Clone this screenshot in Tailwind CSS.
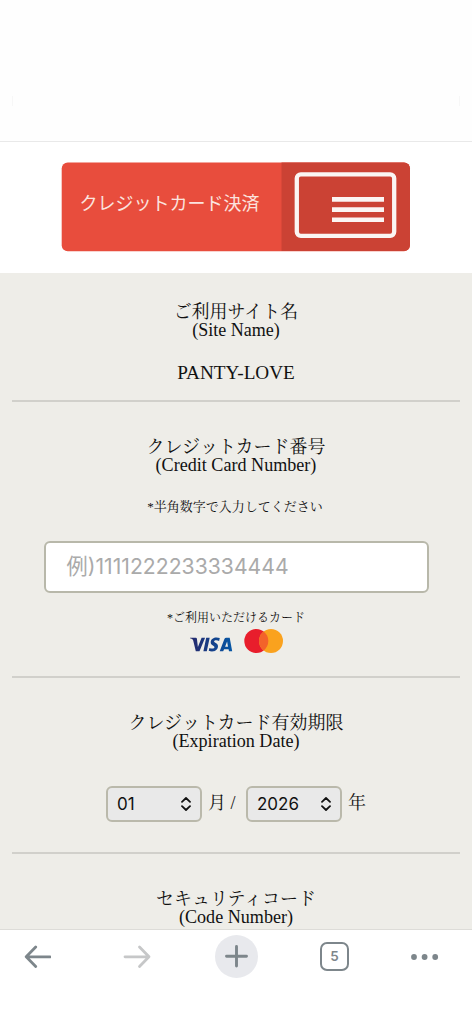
<!DOCTYPE html>
<html lang="ja">
<head>
<meta charset="utf-8">
<meta name="viewport" content="width=device-width, initial-scale=1">
<title>クレジットカード決済</title>
<script src="https://cdn.jsdelivr.net/npm/@tailwindcss/browser@4"></script>
</head>
<body class="bg-white">
<div class="flex h-[1024px] w-[472px] flex-col overflow-hidden font-['Liberation_Serif','Noto_Serif_CJK_JP','Noto_Sans_CJK_JP',serif] text-[#111] whitespace-nowrap">
  <header class="flex h-[142px] shrink-0 items-start justify-between border-b border-[#e9e9e9] bg-[#fefefe] px-3 pt-24">
    <span class="h-2.5 w-px bg-[#f7f7f7]"></span>
    <span class="h-2.5 w-px bg-[#f7f7f7]"></span>
  </header>

  <main class="min-h-0 flex-1 overflow-hidden bg-[#eeede8]">
    <div class="h-[131px] bg-white pt-5 pl-[61px]">
      <svg class="block" width="350" height="90" viewBox="0 0 350 90">
        <rect x=".7" y=".5" width="348.3" height="88.7" rx="6" fill="#e84d3d"/>
        <path d="M220.500 .5H343a6 6 0 0 1 6 6V83a6 6 0 0 1-6 6H220.500Z" fill="#cb4234"/>
        <rect x="235.800" y="12.300" width="97.400" height="61.500" rx="4" fill="none" stroke="#fbf5f3" stroke-width="4.300"/>
        <path d="M271 37.400h52M271 47.600h52M271 57.700h52" stroke="#fbf5f3" stroke-width="4.600"/>
        <text x="18.500" y="48.300" font-family="Noto Sans CJK JP, sans-serif" font-size="18.500" fill="#fbe3df" textLength="180" lengthAdjust="spacingAndGlyphs">クレジットカード決済</text>
      </svg>
    </div>

    <section class="mx-3 flex h-[129px] flex-col items-center border-b-2 border-[#d1d0cb] pt-[29px]">
      <h2 class="relative top-px text-[18px] leading-[19px]">ご利用サイト名</h2>
      <p class="text-[18px] leading-[19px]">(Site Name)</p>
      <p class="mt-[23px] text-[19.2px] leading-[19px]">PANTY-LOVE</p>
    </section>

    <section class="mx-3 flex h-[276px] flex-col items-center border-b-2 border-[#d1d0cb] pt-[35px]">
      <h2 class="relative top-px text-[18px] leading-[19px]">クレジットカード番号</h2>
      <p class="text-[18.1px] leading-[19px]">(Credit Card Number)</p>
      <p class="mt-6 -ml-0.5 text-[13px] leading-[16px]">*半角数字で入力してください</p>
      <div class="mt-[26px] flex h-[52px] w-[385px] items-center rounded-[6px] border-[2.5px] border-[#b8b8aa] bg-white pl-[21px] font-['Inter','Noto_Sans_CJK_JP',sans-serif] text-[21.2px] text-[#aaa]">例)1111222233334444</div>
      <p class="mt-[17px] text-[12px] leading-[16px]">*ご利用いただけるカード</p>
      <svg class="mt-[2px]" width="96" height="26" viewBox="0 0 96 26">
        <defs><linearGradient id="visa"><stop stop-color="#25286b"/><stop offset="1" stop-color="#0757a5"/></linearGradient></defs>
        <path fill="url(#visa)" d="M2 9.700h5.800q1 .1 1.100 1l1 8.200 3.700-9.200h3.500l-5.600 13.600H7.800L5.200 12.500Q4.900 10.800 2 10.200ZM18.200 9.700h3.500l-2.900 13.600h-3.400ZM31.800 10.100l-.7 2.800c-2-1-4.900-.9-5 .5-.1 1.200 4.300 1.600 3.900 5.100-.5 4.700-5.400 5.800-9.300 4.300l.7-2.900c2.200 1.200 5 .8 5.100-.6.100-1.600-4.100-1.700-3.800-5.200.4-4.200 5-5.600 9.100-4ZM38.200 9.700h3.500l2.500 13.600h-3.200l-.4-2.100h-4.500l-.9 2.100h-3.500l4.700-12.200q.5-1.400 1.800-1.400Zm.9 3.900-2 5.100h2.900Z"/>
        <circle cx="68.300" cy="12.900" r="12" fill="#e81e2c"/>
        <circle cx="83" cy="12.900" r="12" fill="#faa21e"/>
        <path d="M75.650 3.400a12 12 0 0 1 0 19a12 12 0 0 1 0-19Z" fill="#f3632a"/>
      </svg>
    </section>

    <section class="mx-3 flex h-[176px] flex-col items-center border-b-2 border-[#d1d0cb] pt-[35px]">
      <h2 class="relative top-px text-[18px] leading-[19px]">クレジットカード有効期限</h2>
      <p class="text-[18.1px] leading-[19px]">(Expiration Date)</p>
      <div class="mt-[35px] flex items-center text-[18px]">
        <div class="flex h-9 w-24 items-center justify-between rounded-[6px] border-[2.5px] border-[#bab9ab] bg-[#e9e9e9] pr-[9px] pl-[9px] font-['Inter',sans-serif] text-[17px]">
          <span class="pt-px">01</span>
          <svg width="10" height="14" viewBox="0 0 10 14" fill="none" stroke="#111" stroke-width="1.800" stroke-linecap="round" stroke-linejoin="round"><path d="M1 4.800 5 1l4 3.800M1 9.200 5 13l4-3.800"/></svg>
        </div>
        <span class="relative -top-px ml-1.5 w-[38px]">月 /</span>
        <div class="flex h-9 w-24 items-center justify-between rounded-[6px] border-[2.5px] border-[#bab9ab] bg-[#e9e9e9] pr-[9px] pl-[9px] font-['Inter',sans-serif] text-[17px]">
          <span class="pt-px">2026</span>
          <svg width="10" height="14" viewBox="0 0 10 14" fill="none" stroke="#111" stroke-width="1.800" stroke-linecap="round" stroke-linejoin="round"><path d="M1 4.800 5 1l4 3.800M1 9.200 5 13l4-3.800"/></svg>
        </div>
        <span class="relative -top-px ml-1.5">年</span>
      </div>
    </section>

    <section class="flex flex-col items-center pt-[35px]">
      <h2 class="relative top-px text-[18px] leading-[19px]">セキュリティコード</h2>
      <p class="text-[18.1px] leading-[19px]">(Code Number)</p>
    </section>
  </main>

  <nav class="flex h-[95px] shrink-0 items-start border-t border-[#dddcd8] bg-white pt-[5px] pl-[23px]">
    <svg class="mt-[7px] mr-[71px]" width="28" height="28" viewBox="0 0 28 28" fill="none" stroke="#7d868b" stroke-width="2.800" stroke-linecap="round" stroke-linejoin="round"><path d="M27 14.800H3.500M12.700 5.100 3.200 14.800l9.500 9.600"/></svg>
    <svg class="mt-[7px] mr-[64px]" width="30" height="28" viewBox="0 0 30 28" fill="none" stroke="#c6c7c8" stroke-width="2.800" stroke-linecap="round" stroke-linejoin="round"><path d="M3 14.800h24M17.500 5.100l9.500 9.700-9.500 9.600"/></svg>
    <svg class="-ml-[1px]" width="43" height="43" viewBox="0 0 43 43"><circle cx="21.500" cy="21.500" r="21.500" fill="#e8e9ed"/><path d="M21.500 11.500v19.500M11.500 21.300h20" fill="none" stroke="#7d868b" stroke-width="2.900" stroke-linecap="round"/></svg>
    <div class="mt-[7px] ml-[62px] flex size-[29px] items-center justify-center rounded-[7px] border-[2.5px] border-[#7d868b] font-['Inter',sans-serif] text-[13.5px] font-semibold text-[#7d868b]">5</div>
    <svg class="mt-[17.500px] ml-[62px]" width="28" height="8" viewBox="0 0 28 8" fill="#7d868b"><circle cx="3" cy="4" r="2.900"/><circle cx="13.600" cy="4" r="2.900"/><circle cx="24.200" cy="4" r="2.900"/></svg>
  </nav>
</div>
</body>
</html>
